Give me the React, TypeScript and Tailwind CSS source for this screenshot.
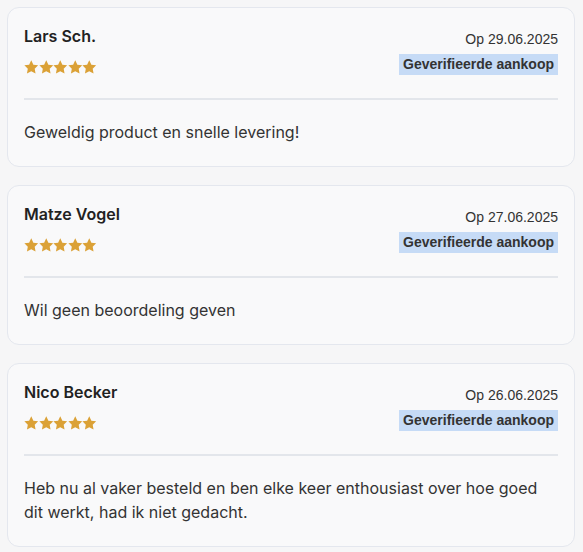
const reviews = [
  {
    name: 'Lars Sch.',
    date: 'Op 29.06.2025',
    text: 'Geweldig product en snelle levering!',
  },
  {
    name: 'Matze Vogel',
    date: 'Op 27.06.2025',
    text: 'Wil geen beoordeling geven',
  },
  {
    name: 'Nico Becker',
    date: 'Op 26.06.2025',
    text: 'Heb nu al vaker besteld en ben elke keer enthousiast over hoe goed dit werkt, had ik niet gedacht.',
  },
]

function Star() {
  return (
    <svg viewBox="0 0 24 23" className="h-[14px] w-[14.5px]" fill="#dba136">
      <path d="M12 .5l3.5 7.2 7.9 1.1-5.7 5.6 1.4 7.9L12 18.5l-7.1 3.8 1.4-7.9L.6 8.8l7.9-1.1z" />
    </svg>
  )
}

function ReviewCard({ name, date, text }: { name: string; date: string; text: string }) {
  return (
    <div className="rounded-[12px] border border-[#e4e7ee] bg-[#f9f9fa] px-4 pb-[22px] pt-4">
      <div className="flex items-start justify-between">
        <div>
          <div className="font-['Inter',sans-serif] text-[16px] font-semibold leading-6 text-[#222]">
            {name}
          </div>
          <div className="mt-[12px] flex">
            <Star />
            <Star />
            <Star />
            <Star />
            <Star />
          </div>
        </div>
        <div className="flex flex-col items-end font-['Liberation_Sans',Arial,sans-serif]">
          <div className="mt-[7px] text-[14px] leading-4 text-[#333]">{date}</div>
          <div className="mt-[7px] bg-[#c6dbf6] px-[4px] text-[14px] font-bold leading-[21px] text-[#333]">
            Geverifieerde aankoop
          </div>
        </div>
      </div>
      <div className="mt-[23px] h-[2px] bg-[#e3e6eb]" />
      <p className="mt-[20px] font-['Inter',sans-serif] text-[16px] leading-6 text-[#333]">{text}</p>
    </div>
  )
}

export default function App() {
  return (
    <div className="min-h-[552px] bg-[#f6f6f7] px-[7px] pt-[7px] pr-[8px]">
      <div className="flex flex-col gap-[18px]">
        {reviews.map((r) => (
          <ReviewCard key={r.name} {...r} />
        ))}
      </div>
    </div>
  )
}
